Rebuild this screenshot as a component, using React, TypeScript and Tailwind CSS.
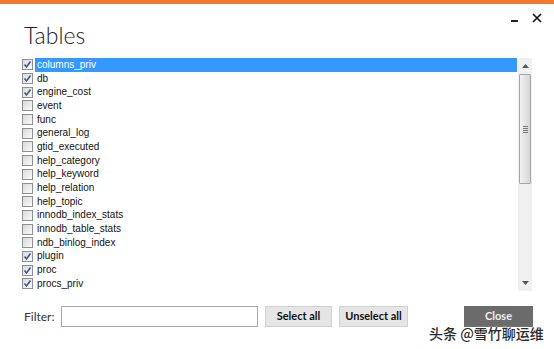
import React from "react";

const rows: [string, boolean][] = [
  ["columns_priv", true],
  ["db", true],
  ["engine_cost", true],
  ["event", false],
  ["func", false],
  ["general_log", false],
  ["gtid_executed", false],
  ["help_category", false],
  ["help_keyword", false],
  ["help_relation", false],
  ["help_topic", false],
  ["innodb_index_stats", false],
  ["innodb_table_stats", false],
  ["ndb_binlog_index", false],
  ["plugin", true],
  ["proc", true],
  ["procs_priv", true],
];

function Check({ checked }: { checked: boolean }) {
  return (
    <div className="w-[11px] h-[11px] border border-[#8e8f8f] bg-gradient-to-br from-[#d9d9d9] to-[#fbfbfb] flex items-center justify-center shrink-0">
      {checked && (
        <svg width="9" height="9" viewBox="0 0 9 9">
          <path d="M1.5 4.5 L3.5 7 L7.5 1.5" fill="none" stroke="#3c5a8c" strokeWidth="1.6" />
        </svg>
      )}
    </div>
  );
}

export default function App() {
  return (
    <div className="w-[554px] h-[349px] bg-white flex flex-col relative overflow-hidden" style={{ fontFamily: "Lato, 'Liberation Sans', sans-serif" }}>
      <div className="h-[4px] bg-[#f37b31] shrink-0" />
      <div className="flex justify-between pl-[24px] pr-[12px] shrink-0">
        <div className="mt-[16px] text-[23px] leading-[30px] font-light text-[#222]">Tables</div>
        <div className="flex items-start gap-[14px] pt-[4px] text-[#111]">
          <div className="w-[7px] h-[2px] bg-[#222] mt-[12px]" />
          <svg width="10" height="10" viewBox="0 0 10 10" className="mt-[5px]">
            <path d="M1 1 L9 9 M9 1 L1 9" stroke="#111" strokeWidth="1.6" />
          </svg>
        </div>
      </div>
      <div className="flex pl-[22px] pr-[22px] mt-[8px] h-[233px] shrink-0">
        <div className="flex-1 flex flex-col" style={{ fontFamily: "'Liberation Sans', Arial, sans-serif" }}>
          {rows.map(([name, checked], i) => (
            <div key={name} className="h-[13.7px] flex items-center">
              <Check checked={checked} />
              <div
                className={
                  "ml-[2px] mr-[1px] flex-1 h-full flex items-center pl-[2px] text-[10px] leading-none " +
                  (i === 0 ? "bg-[#3399ff] text-white" : "text-[#111]")
                }
              >
                {name}
              </div>
            </div>
          ))}
        </div>
        <div className="w-[14px] bg-[#f0f0f0] flex flex-col items-stretch">
          <div className="h-[16px] flex items-center justify-center">
            <svg width="7" height="4" viewBox="0 0 7 4"><path d="M0 4 L3.5 0 L7 4 Z" fill="#555" /></svg>
          </div>
          <div className="h-[110px] mx-[1px] border border-[#a6a6a6] rounded-[1px] bg-gradient-to-r from-[#f2f2f2] to-[#d6d6d6] flex items-center justify-center">
            <div className="flex flex-col gap-[1px]">
              <div className="w-[5px] h-[1px] bg-[#777]" />
              <div className="w-[5px] h-[1px] bg-[#777]" />
              <div className="w-[5px] h-[1px] bg-[#777]" />
              <div className="w-[5px] h-[1px] bg-[#777]" />
            </div>
          </div>
          <div className="flex-1" />
          <div className="h-[16px] flex items-center justify-center">
            <svg width="7" height="4" viewBox="0 0 7 4"><path d="M0 0 L7 0 L3.5 4 Z" fill="#555" /></svg>
          </div>
        </div>
      </div>
      <div className="flex items-center pl-[24px] mt-[15px] h-[21px] shrink-0">
        <div className="text-[12px] text-[#333] w-[37px]">Filter:</div>
        <div className="w-[197px] h-[21px] border border-[#a9a9a9] bg-white" />
        <div className="ml-[7px] w-[67px] h-[21px] bg-[#e5e5e5] border border-[#d0d0d0] flex items-center justify-center text-[11px] font-bold text-[#111]">Select all</div>
        <div className="ml-[7px] w-[69px] h-[21px] bg-[#e5e5e5] border border-[#d0d0d0] flex items-center justify-center text-[11px] font-bold text-[#111]">Unselect all</div>
        <div className="ml-[56px] w-[69px] h-[21px] bg-[#6b6b6b] flex items-center justify-center text-[11px] font-bold text-[#eeeeee]">Close</div>
      </div>
      <div
        className="absolute left-[429px] top-[324px] text-[14px] leading-[18px] font-medium text-[#2a2a2a]"
        style={{ fontFamily: "'Noto Sans CJK SC', sans-serif", textShadow: "0 0 2px #fff, 0 0 2px #fff" }}
      >
        头条 @雪竹聊运维
      </div>
    </div>
  );
}
